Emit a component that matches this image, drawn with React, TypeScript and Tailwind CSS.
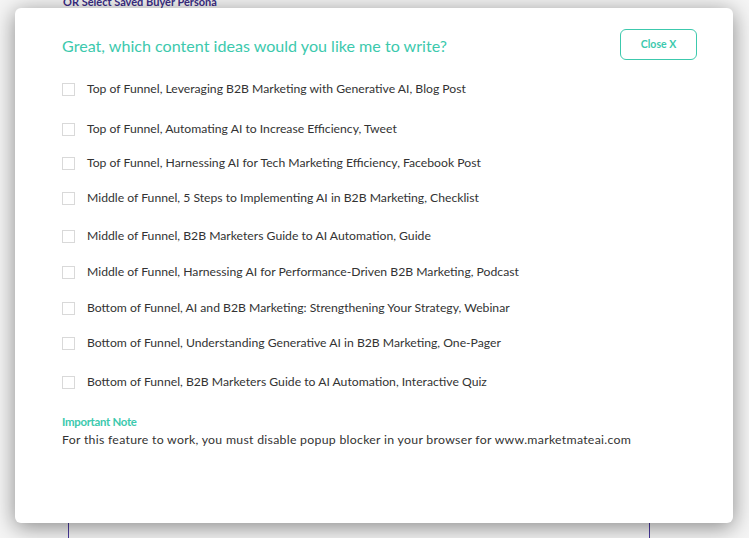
import React from "react";

const items: { label: string; cls: string }[] = [
  { label: "Top of Funnel, Leveraging B2B Marketing with Generative AI, Blog Post", cls: "mt-0" },
  { label: "Top of Funnel, Automating AI to Increase Efficiency, Tweet", cls: "mt-[26px]" },
  { label: "Top of Funnel, Harnessing AI for Tech Marketing Efficiency, Facebook Post", cls: "mt-[20px]" },
  { label: "Middle of Funnel, 5 Steps to Implementing AI in B2B Marketing, Checklist", cls: "mt-[21px]" },
  { label: "Middle of Funnel, B2B Marketers Guide to AI Automation, Guide", cls: "mt-[24px]" },
  { label: "Middle of Funnel, Harnessing AI for Performance-Driven B2B Marketing, Podcast", cls: "mt-[22px]" },
  { label: "Bottom of Funnel, AI and B2B Marketing: Strengthening Your Strategy, Webinar", cls: "mt-[22px]" },
  { label: "Bottom of Funnel, Understanding Generative AI in B2B Marketing, One-Pager", cls: "mt-[21px]" },
  { label: "Bottom of Funnel, B2B Marketers Guide to AI Automation, Interactive Quiz", cls: "mt-[25px]" },
];

export default function App() {
  const font = { fontFamily: "Lato, 'Noto Sans', sans-serif" };
  return (
    <div className="relative w-[749px] h-[538px] overflow-hidden bg-[#f5f5f5]" style={font}>
      {/* page behind */}
      <div className="pl-[63px] -mt-[6px]">
        <div className="text-[11px] font-bold text-[#3b2d86]">OR Select Saved Buyer Persona</div>
        <div className="ml-[5px] w-[582px] h-[600px] border-x border-[#4a3a9e] mt-[2px]" />
      </div>

      {/* modal */}
      <div className="absolute left-[15px] top-[8px] w-[718px] h-[515px] bg-white rounded-[6px] shadow-[0_4px_22px_rgba(0,0,0,0.45)]">
        <div className="flex items-start justify-between pl-[47px] pr-[36px] pt-[21px]">
          <h2 className="text-[16.1px] text-[#3cc9ad] font-normal mt-[7px] leading-[20px]">
            Great, which content ideas would you like me to write?
          </h2>
          <button className="w-[77px] h-[31px] border border-[#3cc9ad] rounded-[6px] text-[10.5px] font-bold text-[#3cc9ad]">
            Close X
          </button>
        </div>

        <div className="flex flex-col pl-[47px] mt-[22px]">
          {items.map((it) => (
            <label key={it.label} className={`flex items-center h-[14px] ${it.cls}`}>
              <span className="w-[13px] h-[13px] border border-[#d9d9d9] bg-white shrink-0" />
              <span className="ml-[12px] text-[12.2px] text-[#333333] whitespace-nowrap leading-[14px]">
                {it.label}
              </span>
            </label>
          ))}
        </div>

        <div className="pl-[47px] mt-[25px]">
          <div className="text-[11.4px] font-bold tracking-[-0.3px] text-[#3cc9ad] leading-[16px]">Important Note</div>
          <div className="text-[12.3px] tracking-[0.28px] text-[#333333] leading-[18px] mt-[1px] whitespace-nowrap">
            For this feature to work, you must disable popup blocker in your browser for www.marketmateai.com
          </div>
        </div>
      </div>
    </div>
  );
}
